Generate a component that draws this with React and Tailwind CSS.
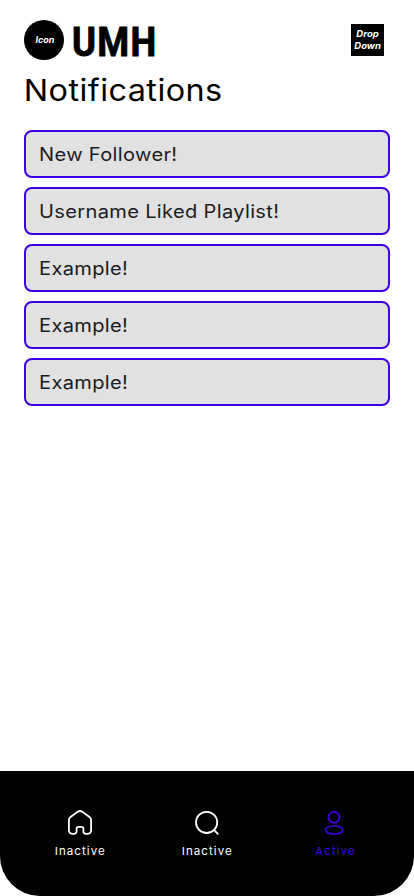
const notifications = [
  'New Follower!',
  'Username Liked Playlist!',
  'Example!',
  'Example!',
  'Example!',
];

function HomeIcon() {
  return (
    <svg className="block h-8 w-8" viewBox="0 0 32 32" fill="none" stroke="currentColor" strokeWidth="1.8" strokeLinejoin="round">
      <path d="M4.9 12.9c0-1.3.5-2.2 1.6-3L13.7 4.8c1.4-1 3.2-1 4.6 0l7.2 5.1c1.1.8 1.6 1.7 1.6 3V23.2a3.6 3.6 0 0 1-3.6 3.6h-1.6a2.5 2.5 0 0 1-2.5-2.5v-2.8a1.7 1.7 0 0 0-1.7-1.7h-3.4a1.7 1.7 0 0 0-1.7 1.7v2.8a2.5 2.5 0 0 1-2.5 2.5H8.5a3.6 3.6 0 0 1-3.6-3.6Z" />
    </svg>
  );
}

function SearchIcon() {
  return (
    <svg className="block h-8 w-8" viewBox="0 0 32 32" fill="none" stroke="currentColor" strokeWidth="1.8" strokeLinecap="round">
      <circle cx="15.6" cy="15.4" r="10.6" />
      <path d="M23.2 23.2l3.6 3.6" />
    </svg>
  );
}

function UserIcon() {
  return (
    <svg className="block h-8 w-8" viewBox="0 0 32 32" fill="none" stroke="currentColor" strokeWidth="1.7">
      <circle cx="16" cy="10.3" r="5.5" />
      <path d="M7.7 23.1c0-2.3 2.8-4.1 8.5-4.1s8.5 1.8 8.5 4.1-2.8 3.9-8.5 3.9-8.5-1.6-8.5-3.9Z" />
    </svg>
  );
}

const tabs = [
  { id: 'home', label: 'Inactive', Icon: HomeIcon },
  { id: 'search', label: 'Inactive', Icon: SearchIcon },
  { id: 'profile', label: 'Active', Icon: UserIcon, active: true },
];

export default function App() {
  return (
    <div className="flex h-[896px] w-[414px] flex-col overflow-hidden bg-white font-['Inter',sans-serif] text-black">
      <header className="flex h-[60px] items-start justify-between pt-5 pr-[30px] pl-6">
        <div className="flex items-start">
          <div className="flex h-10 w-10 items-center justify-center rounded-full bg-black pl-[2px] text-[9px] leading-3 font-bold text-white italic">
            Icon
          </div>
          <span className="mt-[3px] ml-[8px] origin-left scale-x-[0.91] font-['Roboto',sans-serif] text-[40px] leading-10 font-bold tracking-[1.4px] [-webkit-text-stroke:0.9px_black]">UMH</span>
        </div>
        <div className="mt-1 flex h-8 w-[33px] flex-col items-center justify-center bg-black text-[9px] leading-3 font-bold text-white italic">
          <span className="scale-x-[1.06]">Drop</span>
          <span className="scale-x-[1.06]">Down</span>
        </div>
      </header>
      <h1 className="h-[70px] w-fit origin-left scale-x-[1.08] pt-[11px] pl-[22px] text-[30px] leading-[38px] tracking-[0.4px]">Notifications</h1>
      <ul className="flex flex-col gap-[9px] px-6">
        {notifications.map((text, i) => (
          <li key={i} className="flex h-12 items-center rounded-lg border-2 border-[#3b00e5] bg-[#e1e1e1] pl-[13px] text-[18px] text-[#1c1c1c]">
            <span className="origin-left scale-x-[1.115] tracking-[0.3px]">{text}</span>
          </li>
        ))}
      </ul>
      <nav className="mt-auto flex h-[125px] justify-between rounded-b-[40px] bg-black px-4 pt-9">
        {tabs.map(({ id, label, Icon, active }) => (
          <div key={id} className={`flex w-32 flex-col items-center ${active ? 'text-[#3d00e0]' : 'text-white'}`}>
            <Icon />
            <span className="mt-1 scale-x-[1.05] pl-px text-[11px] leading-4 tracking-[1px]">{label}</span>
          </div>
        ))}
      </nav>
    </div>
  );
}
